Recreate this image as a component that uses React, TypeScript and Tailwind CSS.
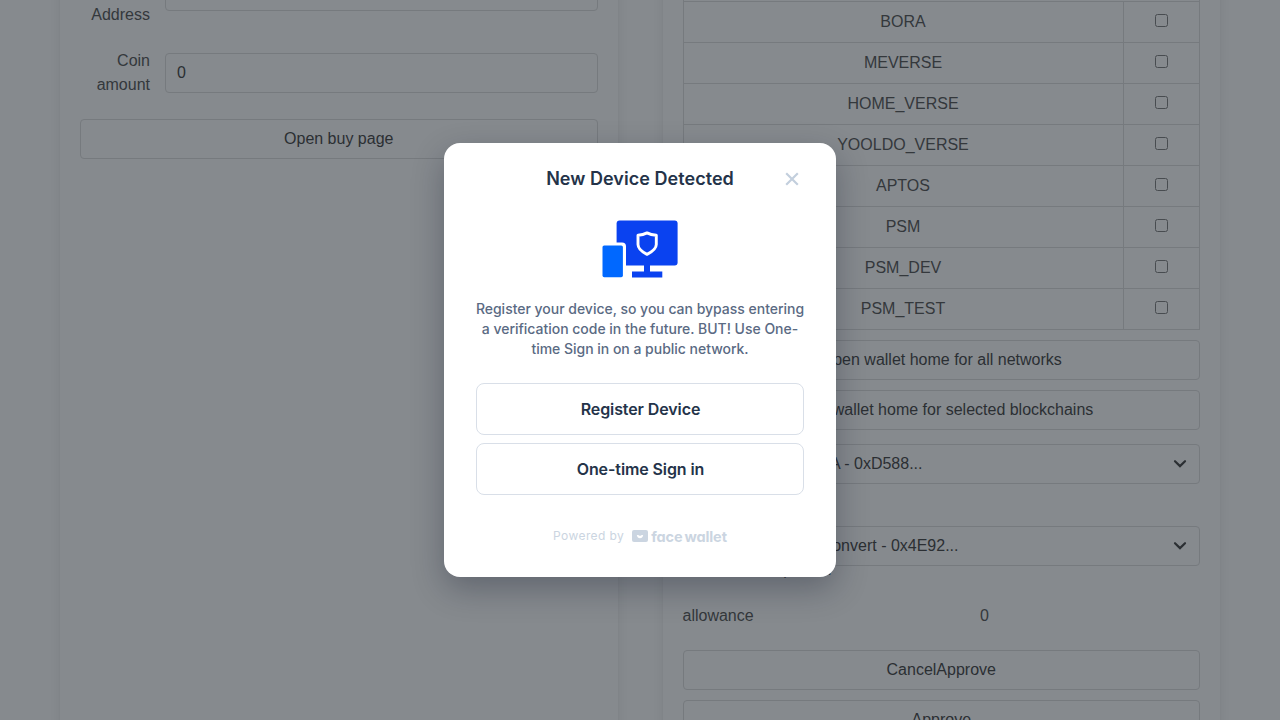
import type { ReactNode } from 'react';

const networks = ['BORA', 'MEVERSE', 'HOME_VERSE', 'YOOLDO_VERSE', 'APTOS', 'PSM', 'PSM_DEV', 'PSM_TEST'];

const PANEL =
  'h-[900px] w-[557.5px] shrink-0 rounded-md bg-white p-5 shadow-[0_8px_16px_-2px_rgba(10,10,10,0.1),0_0_0_1px_rgba(10,10,10,0.02)]';

function Button({ children }: { children: ReactNode }) {
  return (
    <button className="flex h-10 w-full shrink-0 items-center justify-center rounded border border-[#dbdbdb] bg-white text-[#363636]">
      {children}
    </button>
  );
}

function Select({ value, width }: { value: string; width: string }) {
  return (
    <div className="flex h-10 items-center justify-between rounded border border-[#dbdbdb] pr-3 text-[#363636]">
      <div className={`flex justify-end whitespace-nowrap ${width}`}>{value}</div>
      <svg width="14" height="10" viewBox="0 0 14 10" fill="none" stroke="#363636" strokeWidth="2.2">
        <path d="M2 2.200 7 7.100 12 2.200" strokeLinecap="round" />
      </svg>
    </div>
  );
}

function BuyPanel() {
  return (
    <section className={`${PANEL} -mt-[49px] flex flex-col gap-[22px]`}>
      <div className="flex h-14 items-start gap-[15px]">
        <label className="w-[70px] pt-2 text-right">Coin Address</label>
        <input className="h-10 min-w-0 flex-1 rounded border border-[#dbdbdb] px-[11px]" />
      </div>
      <div className="flex h-12 items-center gap-[15px]">
        <label className="w-[70px] text-right">Coin amount</label>
        <input
          className="h-10 min-w-0 flex-1 rounded border border-[#dbdbdb] px-[11px] text-[#363636]"
          defaultValue="0"
        />
      </div>
      <Button>Open buy page</Button>
    </section>
  );
}

function WalletPanel() {
  return (
    <section className={`${PANEL} -mt-[59px]`}>
      <div className="border-x border-[#dbdbdb]">
        <div className="h-[41px] border-b border-[#dbdbdb]" />
        {networks.map((name) => (
          <div key={name} className="flex h-[41px] border-b border-[#dbdbdb]">
            <div className="flex flex-1 items-center justify-center pr-[0.5px]">{name}</div>
            <div className="flex w-[76px] justify-center border-l border-[#dbdbdb] pt-3">
              <input type="checkbox" className="h-[13px] w-[13px]" />
            </div>
          </div>
        ))}
      </div>
      <div className="mt-2.5 flex flex-col gap-2.5">
        <Button>Open wallet home for all networks</Button>
        <Button>Open wallet home for selected blockchains</Button>
      </div>
      <div className="mt-3.5">
        <Select value="BORA - 0xD588..." width="w-[239px]" />
      </div>
      <div className="mt-[42px]">
        <Select value="Convert - 0x4E92..." width="w-[275px]" />
      </div>
      <div className="-mt-[8px] h-6 pl-[90px]">Spender</div>
      <div className="mt-[22px] flex h-6">
        <div className="w-[297.5px]">allowance</div>
        <div>0</div>
      </div>
      <div className="mt-[22px] flex flex-col gap-2.5">
        <Button>CancelApprove</Button>
        <Button>Approve</Button>
      </div>
    </section>
  );
}

function DeviceIcon() {
  return (
    <svg width="80" height="80" viewBox="0 0 80 80">
      <rect x="16.600" y="11.500" width="61" height="45" rx="3" fill="#0a42f0" />
      <path d="M44 56h6v6.500h12.300V68.500H32V62.500h12z" fill="#0a42f0" />
      <path d="M0 33.500h22a4 4 0 0 1 4 4V72H0z" fill="#fff" />
      <rect x="2.500" y="36.400" width="20.400" height="31.900" rx="1.700" fill="#0068ff" />
      <path
        d="M47 23.900C50 25.500 53 26.100 56.300 26.300V35.500C56.300 40.200 52 42.800 47 45.400 42 42.800 38 40.200 38 35.500V26.300C41 26.100 44 25.500 47 23.900Z"
        fill="none"
        stroke="#fff"
        strokeWidth="2.900"
        strokeLinejoin="round"
      />
    </svg>
  );
}

function ModalButton({ children }: { children: ReactNode }) {
  return (
    <button className="h-[52px] w-full rounded-lg border border-[#d9dfe8] pl-px text-base font-semibold tracking-[-0.1px] text-[#243349]">
      {children}
    </button>
  );
}

function DeviceModal() {
  return (
    <div className="flex h-[434px] w-[392px] flex-col rounded-2xl bg-white px-8 font-['Inter',sans-serif] shadow-[0_12px_32px_rgba(13,20,40,0.3)]">
      <header className="mt-5 flex h-8 items-center justify-between">
        <span className="w-6" />
        <h1 className="pb-0.5 text-[18px] font-semibold tracking-[0.04px] text-[#243349]">New Device Detected</h1>
        <svg width="24" height="24" viewBox="0 0 24 24" fill="none" stroke="#c3cfdd" strokeWidth="2.200">
          <path d="m6.200 6.200 11.600 11.600M17.800 6.200l-11.600 11.600" />
        </svg>
      </header>
      <div className="mt-[14px] flex h-20 justify-center">
        <DeviceIcon />
      </div>
      <p className="-mx-1 mt-[10px] text-center text-sm font-medium tracking-[-0.02px] text-[#5a6a83]">
        Register your device, so you can bypass entering a verification code in the future. BUT! Use One-time Sign in
        on a public network.
      </p>
      <div className="mt-6 flex flex-col gap-2">
        <ModalButton>Register Device</ModalButton>
        <ModalButton>One-time Sign in</ModalButton>
      </div>
      <footer className="mt-8 flex h-[18px] items-center justify-center whitespace-nowrap text-[#cbd5e1]">
        <span className="text-xs tracking-[0.4px]">Powered by</span>
        <svg className="ml-[8px]" width="16" height="12" viewBox="0 0 16 12">
          <rect width="16" height="12" rx="2" fill="#cbd5e1" />
          <path d="M4.800 5.200Q6.400 4.800 8 6 9.600 4.800 11.200 5.200 10.500 8.200 8 8.200 5.500 8.200 4.800 5.200Z" fill="#fff" />
        </svg>
        <span className="ml-[3px] pt-px text-[14.500px] font-bold tracking-[-0.1px] [font-feature-settings:'cv11'] [word-spacing:-1.500px]">
          face wallet
        </span>
      </footer>
    </div>
  );
}

export default function App() {
  return (
    <div className="relative h-[720px] w-[1280px] overflow-hidden bg-white font-['Liberation_Sans',sans-serif] text-base text-[#4a4a4a]">
      <main className="flex h-[720px] items-start justify-center gap-[45px] overflow-hidden">
        <BuyPanel />
        <WalletPanel />
      </main>
      <div className="absolute inset-0 flex items-center justify-center bg-[rgba(35,42,50,0.55)]">
        <DeviceModal />
      </div>
    </div>
  );
}
